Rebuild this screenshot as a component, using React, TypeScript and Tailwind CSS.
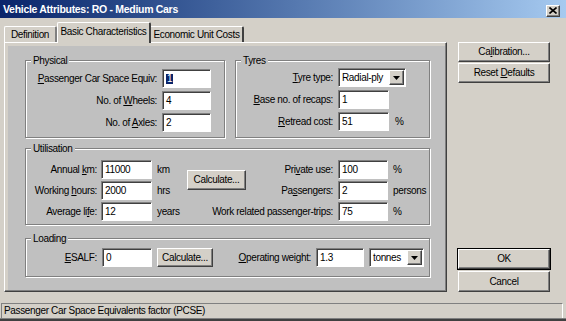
import type { ReactNode } from "react";

const raised =
  "border border-t-white border-l-white border-r-[#404040] border-b-[#404040] shadow-[inset_-1px_-1px_0_#808080]";
const sunken =
  "border border-t-[#808080] border-l-[#808080] border-r-white border-b-white shadow-[inset_1px_1px_0_#404040]";

function Field({ children, w }: { children?: ReactNode; w: string }) {
  return (
    <div className={`${w} h-[19px] bg-white ${sunken} flex items-center pl-[3px] shrink-0`}>
      {children}
    </div>
  );
}

function Select({ value, w }: { value: string; w: string }) {
  return (
    <div className={`${w} h-[19px] bg-white ${sunken} flex items-center pl-[3px] pr-[1px] shrink-0`}>
      <span className="flex-1">{value}</span>
      <div className={`w-[15px] h-[15px] bg-[#d4d0c8] ${raised} flex items-center justify-center`}>
        <svg width="7" height="4" viewBox="0 0 7 4">
          <path d="M0 0h7L3.5 4z" fill="#000" />
        </svg>
      </div>
    </div>
  );
}

function Button({ children, className }: { children: ReactNode; className: string }) {
  return (
    <div className={`bg-[#d4d0c8] ${raised} flex items-center justify-center shrink-0 ${className}`}>
      <span>{children}</span>
    </div>
  );
}

function Group({ title, className, children }: { title: string; className: string; children: ReactNode }) {
  return (
    <div className={`relative border border-[#808080] shadow-[inset_1px_1px_0_#fff,1px_1px_0_#fff] ${className}`}>
      <span className="absolute left-[5px] -top-[6px] px-[2px] bg-[#c0c0c0] leading-[11px]">{title}</span>
      {children}
    </div>
  );
}

function Row({ label, lw, children }: { label: ReactNode; lw: string; children: ReactNode }) {
  return (
    <div className="flex items-center h-[19px]">
      <div className={`${lw} flex justify-end whitespace-nowrap shrink-0`}>{label}</div>
      {children}
    </div>
  );
}

export default function App() {
  return (
    <div className="w-[566px] h-[321px] overflow-hidden bg-[#d4d0c8] flex flex-col text-black text-[10px] leading-none tracking-[-0.35px] font-['Liberation_Sans',Arial,sans-serif]">
      {/* title bar */}
      <div className="h-[18px] shrink-0 flex items-center pl-[3px] pr-[6px] bg-linear-to-r from-[#0a246a] to-[#a6caf0]">
        <span className="flex-1 text-white font-bold text-[10.5px] tracking-[-0.3px] pt-[1px]">
          Vehicle Attributes: RO - Medium Cars
        </span>
        <div className={`w-[14px] h-[12px] mt-[3px] bg-[#d4d0c8] ${raised} flex items-center justify-center`}>
          <svg width="8" height="7" viewBox="0 0 8 7">
            <path d="M0.5 0.5L7.5 6.5M7.5 0.5L0.5 6.5" stroke="#000" strokeWidth="1.6" />
          </svg>
        </div>
      </div>

      <div className="h-[274px] flex shrink-0">
        {/* tabs and page */}
        <div className="w-[443px] ml-[4px] flex flex-col">
          <div className="h-[20px] flex items-end mt-[4px]">
            <div className="w-[53px] h-[16px] border-t border-l border-t-white border-l-white border-r-2 border-r-[#808080] rounded-tl-[2px] rounded-tr-[2px] flex items-center justify-center">
              Definition
            </div>
            <div className="relative z-10 w-[94px] h-[21px] -mb-[1px] bg-[#d4d0c8] border-t border-l border-t-white border-l-white border-r-2 border-r-[#404040] rounded-tl-[2px] rounded-tr-[2px] flex items-start justify-center pt-[4px]">
              Basic Characteristics
            </div>
            <div className="w-[93px] h-[16px] border-t border-t-white border-r-2 border-r-[#404040] rounded-tr-[2px] flex items-center justify-center">
              Economic Unit Costs
            </div>
          </div>

          <div className="h-[250px] border-t border-l border-t-white border-l-white border-r border-b border-r-[#404040] border-b-[#404040] shadow-[inset_-1px_-1px_0_#808080] flex flex-col">
            <div className="flex-1 ml-[3px] mt-[3px] mr-[1px] mb-[1px] bg-[#c0c0c0] pl-[17px] pt-[14px]">
              <div className="flex gap-[10px]">
                <Group title="Physical" className="w-[200px] h-[78px] pt-[8px]">
                  <div className="flex flex-col gap-[3px]">
                    <Row lw="w-[131px]" label={<span><u>P</u>assenger Car Space Equiv:</span>}>
                      <div className="ml-[5px]">
                        <Field w="w-[49px]">
                          <span className="bg-[#0a246a] text-white px-[1px]">1</span>
                        </Field>
                      </div>
                    </Row>
                    <Row lw="w-[131px]" label={<span>No. of <u>W</u>heels:</span>}>
                      <div className="ml-[5px]">
                        <Field w="w-[49px]">4</Field>
                      </div>
                    </Row>
                    <Row lw="w-[131px]" label={<span>No. of <u>A</u>xles:</span>}>
                      <div className="ml-[5px]">
                        <Field w="w-[49px]">2</Field>
                      </div>
                    </Row>
                  </div>
                </Group>
                <Group title="Tyres" className="w-[195px] h-[78px] pt-[7px]">
                  <div className="flex flex-col gap-[3px]">
                    <Row lw="w-[97px]" label={<span><u>T</u>yre type:</span>}>
                      <div className="ml-[5px]">
                        <Select w="w-[68px]" value="Radial-ply" />
                      </div>
                    </Row>
                    <Row lw="w-[97px]" label={<span><u>B</u>ase no. of recaps:</span>}>
                      <div className="ml-[5px]">
                        <Field w="w-[51px]">1</Field>
                      </div>
                    </Row>
                    <Row lw="w-[97px]" label={<span><u>R</u>etread cost:</span>}>
                      <div className="ml-[5px]">
                        <Field w="w-[51px]">51</Field>
                      </div>
                      <span className="ml-[6px]">%</span>
                    </Row>
                  </div>
                </Group>
              </div>

              <Group title="Utilisation" className="w-[405px] h-[77px] mt-[10px] pt-[11px]">
                <div className="grid grid-cols-[75px_56px_30px_59px_92px_55px_1fr] grid-rows-[19px_19px_19px] gap-y-[2px] items-center">
                  <div className="col-start-1 row-start-1 flex justify-end pr-[4px] whitespace-nowrap">
                    <span>Annual <u>k</u>m:</span>
                  </div>
                  <div className="col-start-2 row-start-1"><Field w="w-[51px]">11000</Field></div>
                  <div className="col-start-3 row-start-1">km</div>
                  <div className="col-start-1 row-start-2 flex justify-end pr-[4px] whitespace-nowrap">
                    <span>Working <u>h</u>ours:</span>
                  </div>
                  <div className="col-start-2 row-start-2"><Field w="w-[51px]">2000</Field></div>
                  <div className="col-start-3 row-start-2">hrs</div>
                  <div className="col-start-1 row-start-3 flex justify-end pr-[4px] whitespace-nowrap">
                    <span>Average li<u>f</u>e:</span>
                  </div>
                  <div className="col-start-2 row-start-3"><Field w="w-[51px]">12</Field></div>
                  <div className="col-start-3 row-start-3">years</div>

                  <div className="col-start-4 row-start-1 row-span-2 self-center">
                    <Button className="w-[59px] h-[20px]">Calculate...</Button>
                  </div>

                  <div className="col-start-5 row-start-1 flex justify-end pr-[5px] whitespace-nowrap">
                    <span>Pri<u>v</u>ate use:</span>
                  </div>
                  <div className="col-start-6 row-start-1"><Field w="w-[50px]">100</Field></div>
                  <div className="col-start-7 row-start-1">%</div>
                  <div className="col-start-5 row-start-2 flex justify-end pr-[5px] whitespace-nowrap">
                    <span>Pa<u>s</u>sengers:</span>
                  </div>
                  <div className="col-start-6 row-start-2"><Field w="w-[50px]">2</Field></div>
                  <div className="col-start-7 row-start-2">persons</div>
                  <div className="col-start-4 col-span-2 row-start-3 flex justify-end pr-[5px] whitespace-nowrap">
                    <span>Work related passenger-trips:</span>
                  </div>
                  <div className="col-start-6 row-start-3"><Field w="w-[50px]">75</Field></div>
                  <div className="col-start-7 row-start-3">%</div>
                </div>
              </Group>

              <Group title="Loading" className="w-[405px] h-[39px] mt-[13px] pt-[9px]">
                <div className="flex items-center h-[19px]">
                  <div className="w-[71px] flex justify-end whitespace-nowrap">
                    <span><u>E</u>SALF:</span>
                  </div>
                  <div className="ml-[5px]"><Field w="w-[50px]">0</Field></div>
                  <Button className="ml-[5px] w-[56px] h-[19px]">Calculate...</Button>
                  <div className="w-[98px] flex justify-end whitespace-nowrap">
                    <span><u>O</u>perating weight:</span>
                  </div>
                  <div className="ml-[5px]"><Field w="w-[48px]">1.3</Field></div>
                  <div className="ml-[5px]"><Select w="w-[55px]" value="tonnes" /></div>
                </div>
              </Group>
            </div>
          </div>
        </div>

        {/* side buttons */}
        <div className="w-[92px] ml-[11px] pt-[24px] flex flex-col">
          <Button className="w-[92px] h-[20px]">Ca<u>l</u>ibration...</Button>
          <Button className="w-[92px] h-[20px] mt-[1px]">Reset <u>D</u>efaults</Button>
          <div className="mt-auto flex flex-col gap-[2px]">
            <Button className="w-[92px] h-[20px] outline outline-black">OK</Button>
            <Button className="w-[92px] h-[21px]">Cancel</Button>
          </div>
        </div>
      </div>

      {/* status bar */}
      <div className="mt-[11px] h-[15px] mx-[1px] mr-[3px] shrink-0 border-t border-l border-t-[#808080] border-l-[#808080] border-r border-r-white flex items-center pl-[2px] whitespace-nowrap">
        Passenger Car Space Equivalents factor (PCSE)
      </div>
      <div className="flex-1 border-t border-t-[#808080] bg-[#404040]" />
    </div>
  );
}
